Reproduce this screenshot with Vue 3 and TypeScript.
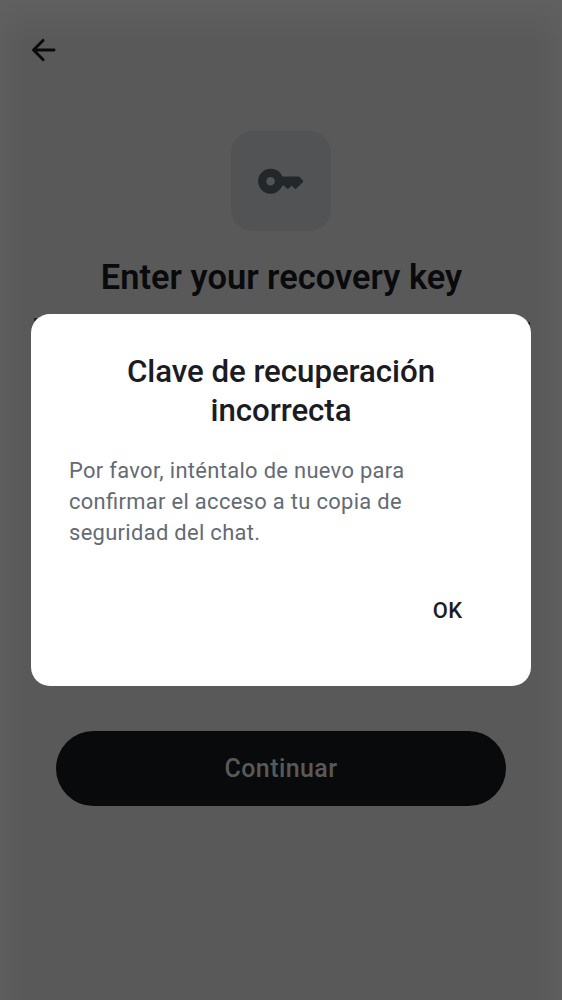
<script setup lang="ts">
import { ref } from 'vue'

const heading = ref('Enter your recovery key')
const dialog = {
  title: ['Clave de recuperación', 'incorrecta'],
  body: ['Por favor, inténtalo de nuevo para', 'confirmar el acceso a tu copia de', 'seguridad del chat.'],
  action: 'OK',
}
</script>

<template>
  <main class="screen">
    <header class="toolbar">
      <button class="back" aria-label="Back">
        <svg width="26" height="26" viewBox="0 0 26 26" fill="none" stroke="#090a0b" stroke-width="2.9" stroke-linecap="round" stroke-linejoin="round">
          <path d="M24 13H3.6M13 3.4 3.5 13l9.5 9.6" />
        </svg>
      </button>
    </header>
    <div class="badge">
      <svg width="46" height="26" viewBox="0 0 46 26">
        <path
          fill="#22272a"
          fill-rule="evenodd"
          d="M12.6 .8a12.5 12.5 0 1 0 11.8 16.6h1.2l3.4 3q.8.7 1.6 0l3-2.8 3 2.9q.8.8 1.7 0l6.2-6q1.3-1.3 0-2.6l-2.4-2.5q-.8-.8-2-.8H24.4A12.5 12.5 0 0 0 12.6 .8Zm0 8.2a4.3 4.3 0 1 1 0 8.6 4.3 4.3 0 0 1 0-8.6Z"
        />
      </svg>
    </div>
    <h1 class="heading">{{ heading }}</h1>
    <div class="details"><i class="edge"></i><i class="edge end"></i></div>
    <button class="continue">Continuar</button>
    <section class="dialog" role="alertdialog">
      <h2><span v-for="line in dialog.title" :key="line">{{ line }}</span></h2>
      <p><span v-for="line in dialog.body" :key="line">{{ line }}</span></p>
      <button class="ok">{{ dialog.action }}</button>
    </section>
  </main>
</template>

<style>
body {
  margin: 0;
}
</style>

<style scoped>
.screen {
  position: relative;
  box-sizing: border-box;
  width: 562px;
  height: 1000px;
  overflow: hidden;
  display: flex;
  flex-direction: column;
  align-items: center;
  font-family: Roboto, sans-serif;
  background:
    linear-gradient(#606060, rgba(96, 96, 96, 0) 40px),
    linear-gradient(90deg, #5e5e5e, #595959 26px, #595959 536px, #5e5e5e);
}
button {
  border: 0;
  padding: 0;
  background: none;
  font-family: inherit;
}
.toolbar {
  box-sizing: border-box;
  width: 100%;
  height: 131px;
  padding: 37px 30px 0;
}
.back {
  display: block;
  width: 26px;
  height: 26px;
}
.back svg {
  display: block;
}
.badge {
  width: 100px;
  height: 100px;
  border-radius: 22px;
  background: #525355;
  display: flex;
  align-items: center;
  justify-content: center;
}
.heading {
  margin: 26px 0 0 1px;
  font-size: 34.4px;
  line-height: 40px;
  font-weight: 600;
  letter-spacing: 0.03px;
  white-space: nowrap;
  color: #090a0b;
}
.details {
  box-sizing: border-box;
  width: 500px;
  height: 413px;
  padding: 21px 1px 0 3px;
  display: flex;
  justify-content: space-between;
  align-items: flex-start;
}
.edge {
  width: 3px;
  height: 3px;
  background: #202224;
}
.edge.end {
  margin-top: 4px;
}
.continue {
  flex: none;
  width: 450px;
  height: 75px;
  margin-top: 21px;
  border-radius: 38px;
  background: #090a0b;
  color: #595959;
  font-size: 25px;
  font-weight: 480;
  letter-spacing: 0.4px;
}
.dialog {
  position: absolute;
  box-sizing: border-box;
  left: 31px;
  top: 314px;
  width: 500px;
  height: 372px;
  padding: 38px 38px 0;
  border-radius: 19px;
  background: #fff;
  display: flex;
  flex-direction: column;
}
h2,
p {
  margin: 0;
}
h2 span,
p span {
  display: block;
  white-space: nowrap;
}
h2 {
  font-size: 31.25px;
  line-height: 39px;
  font-weight: 490;
  letter-spacing: -0.05px;
  text-align: center;
  color: #1b1b23;
}
p {
  margin-top: 25px;
  font-size: 21.9px;
  line-height: 31px;
  letter-spacing: 0.33px;
  font-feature-settings: 'liga' 1;
  color: #636a74;
}
.ok {
  align-self: flex-end;
  margin: 49.5px 30.5px 0 0;
  font-size: 21.9px;
  line-height: 26px;
  font-weight: 500;
  letter-spacing: 0.4px;
  color: #1b1b23;
}
</style>
